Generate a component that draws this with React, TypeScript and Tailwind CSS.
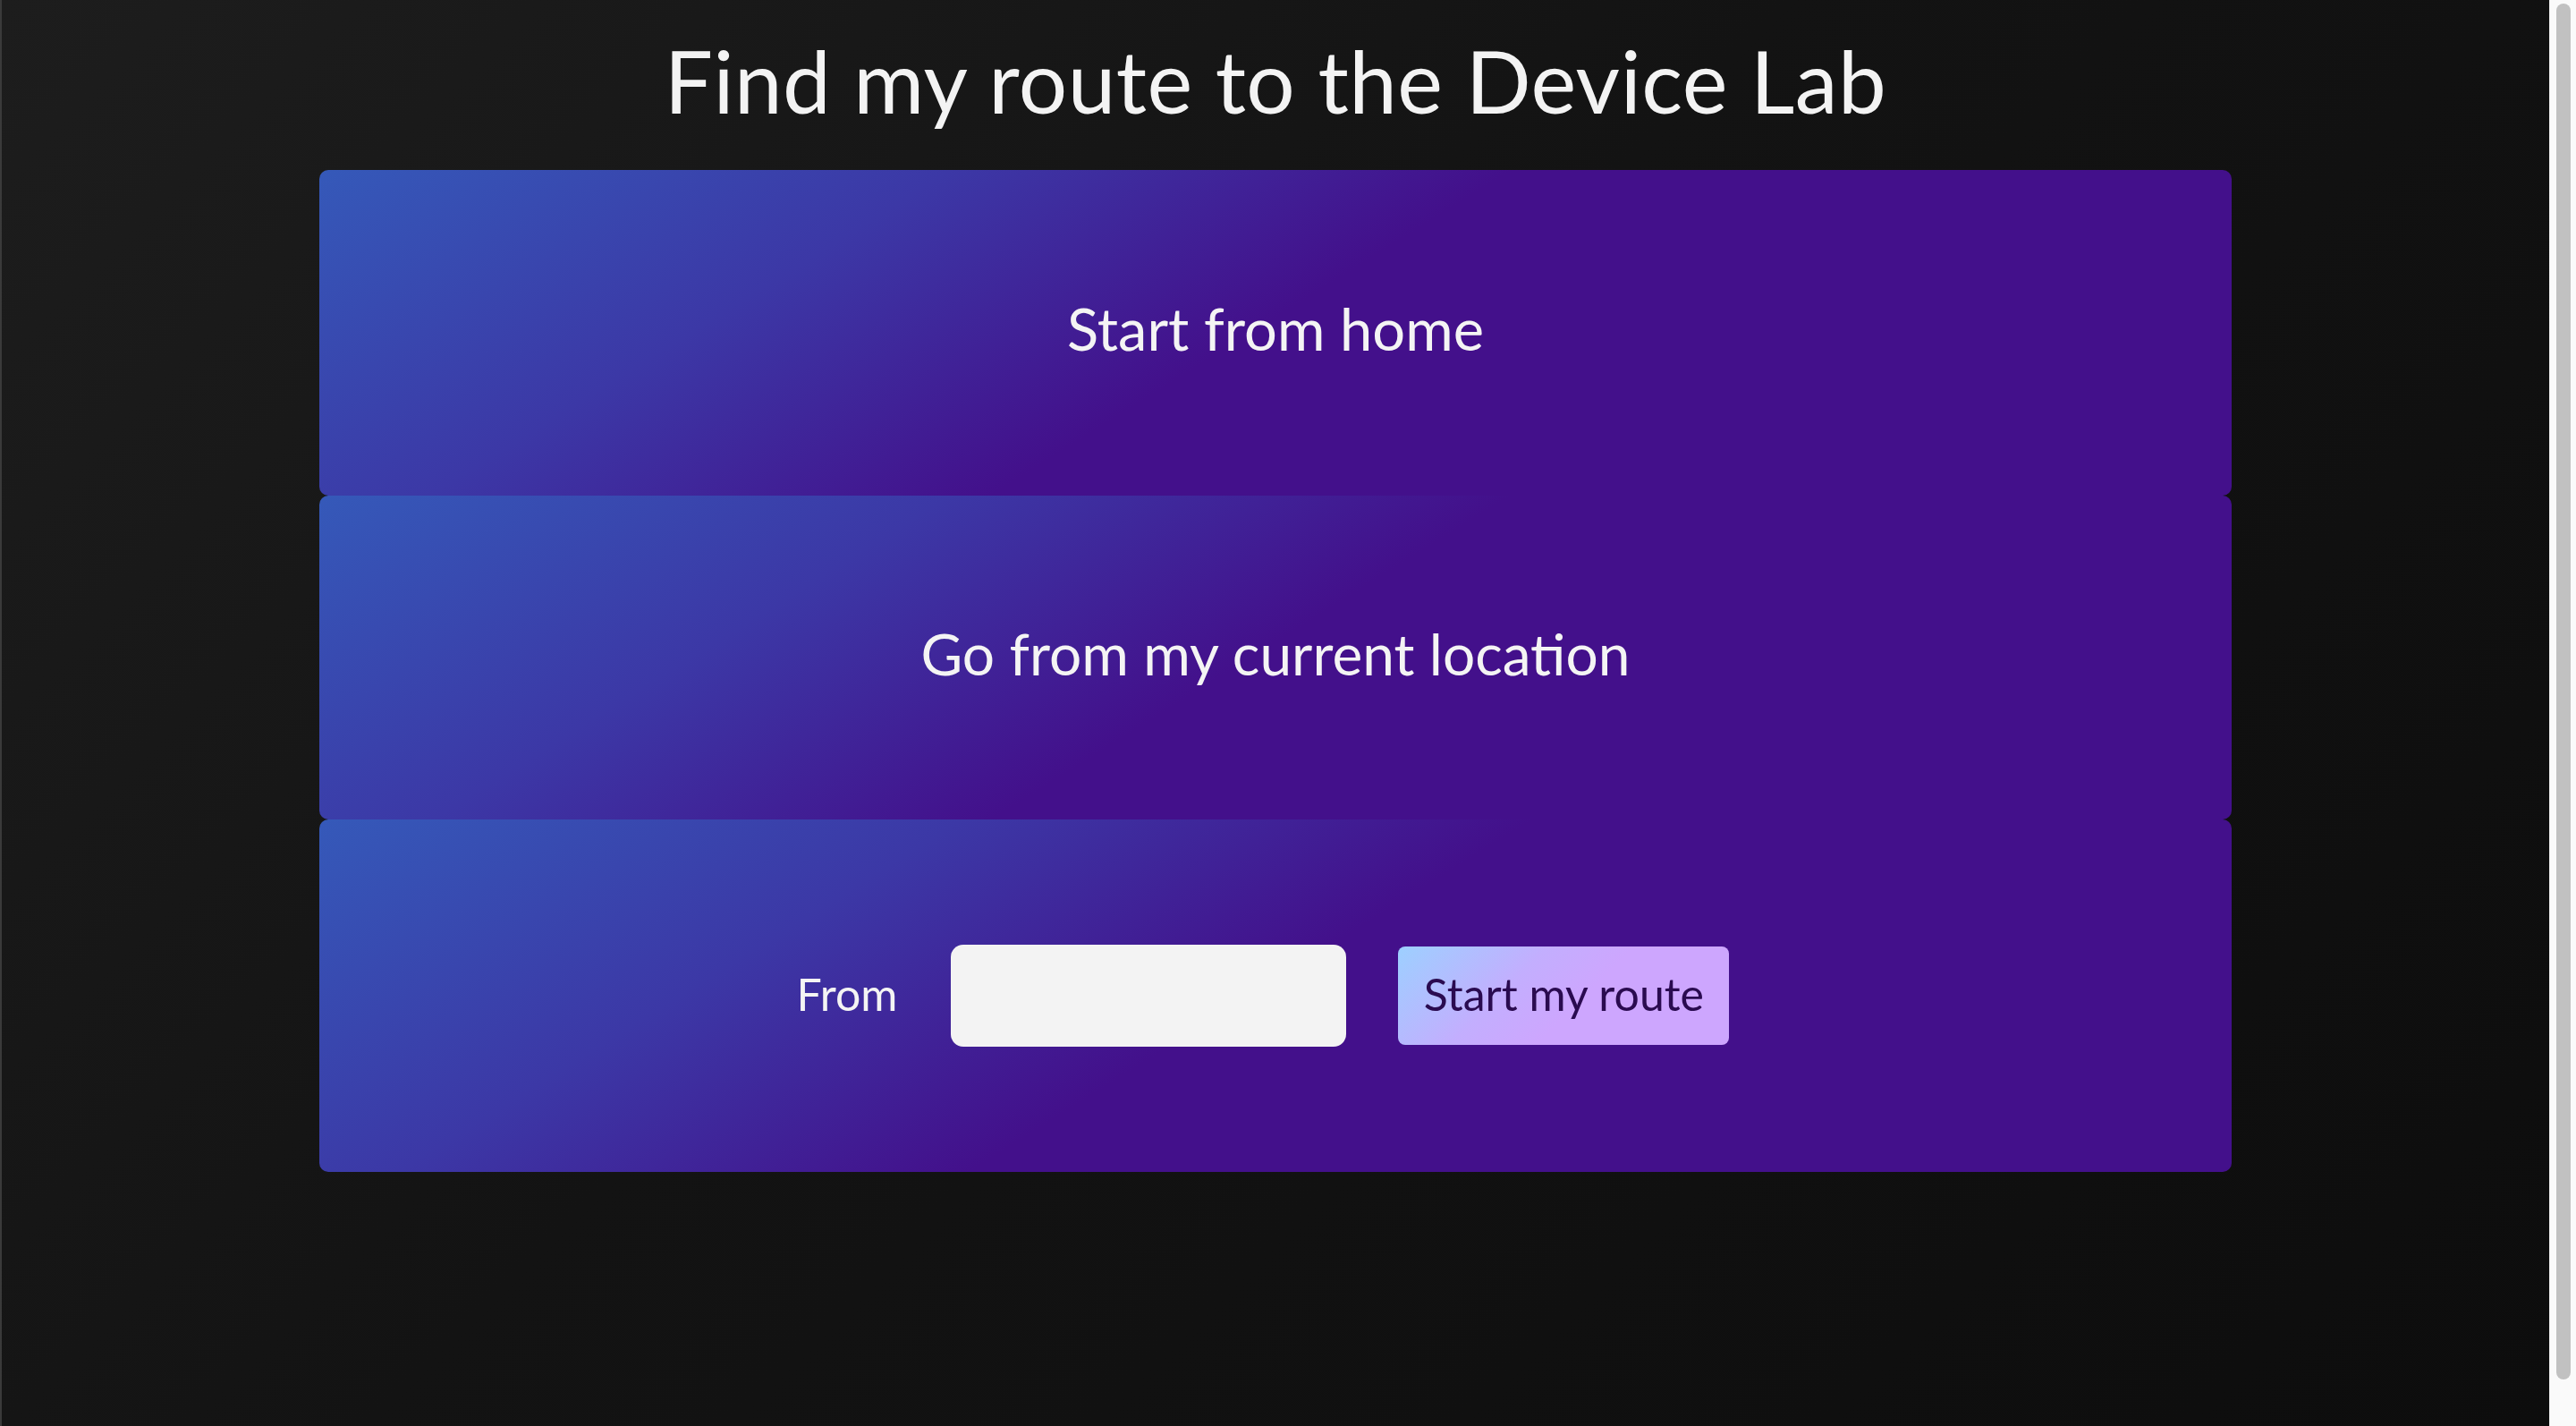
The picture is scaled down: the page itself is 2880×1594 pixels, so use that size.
import React from 'react';

const font = { fontFamily: 'Lato, "Noto Sans", sans-serif' };

const cardBg =
  'bg-[linear-gradient(148deg,#3559b9_0%,#3c38a6_26%,#43108b_49%,#43108b_100%)]';

const App: React.FC = () => {
  return (
    <div className="flex w-full h-[1594px] overflow-hidden" style={font}>
      <main className="flex-1 flex flex-col items-center bg-[linear-gradient(135deg,#1d1d1d_0%,#131313_45%,#0d0d0d_100%)] border-l-2 border-[#3a3a3a]">
        <h1 className="mt-[42px] text-[96px] leading-none font-normal text-[#f3f3f3] tracking-[0.5px]">
          Find my route to the Device Lab
        </h1>

        <div className="mt-[52px] w-[2138px] flex flex-col">
          <button
            className={`h-[364px] rounded-[10px] ${cardBg} flex items-center justify-center pb-[8px] text-[65px] text-[#f4f4f4]`}
          >
            Start from home
          </button>
          <button
            className={`h-[362px] rounded-[10px] ${cardBg} flex items-center justify-center pb-[8px] text-[64px] text-[#f4f4f4]`}
          >
            Go from my current location
          </button>
          <div
            className={`h-[394px] rounded-[10px] ${cardBg} flex items-center justify-center`}
          >
            <label className="text-[50px] text-[#f4f4f4] mr-[60px] pb-[4px]">From</label>
            <input
              type="text"
              className="w-[442px] h-[114px] rounded-[14px] bg-[#f3f3f3] outline-none px-4 text-[40px]"
            />
            <button className="ml-[58px] mr-[28px] w-[370px] h-[110px] rounded-[8px] bg-[linear-gradient(135deg,#9dd0ff_0%,#c3aefe_35%,#cda6fe_55%,#cda6fe_100%)] text-[50px] text-[#2a0b50] pb-[4px]">
              Start my route
            </button>
          </div>
        </div>
      </main>

      <div className="w-[30px] h-full bg-[#fafafa] border-l border-[#ececec] pt-[4px] pl-[7px]">
        <div className="w-[16px] h-[1538px] rounded-full bg-[#c1c1c1]" />
      </div>
    </div>
  );
};

export default App;
